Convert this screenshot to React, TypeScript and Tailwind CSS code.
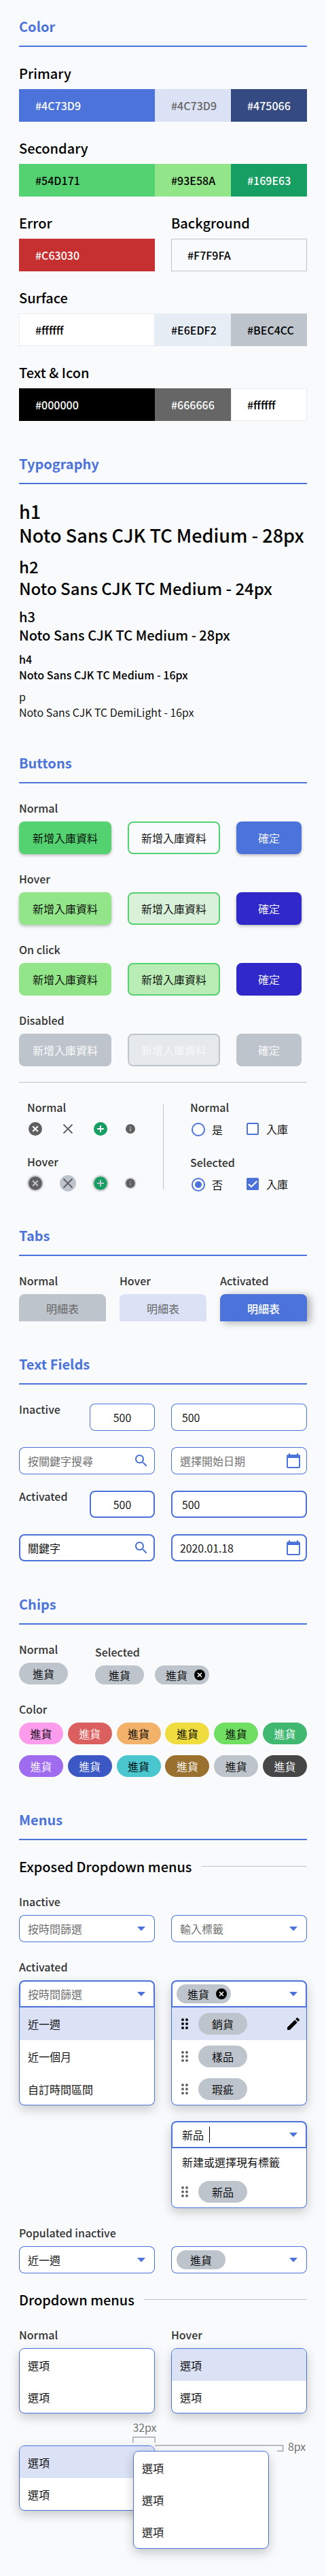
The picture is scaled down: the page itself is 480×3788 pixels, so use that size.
import type { ReactNode } from "react";

function Section({ title, className, children }: { title: string; className: string; children: ReactNode }) {
  return (
    <section className={className}>
      <h2 className="border-b-2 border-[#4C73D9] pt-px pb-3.5 text-xl leading-[29px] font-bold text-[#4C73D9]">{title}</h2>
      {children}
    </section>
  );
}

function Label({ children, className = "" }: { children: ReactNode; className?: string }) {
  return <div className={`text-base leading-6 font-medium text-[#333333] ${className}`}>{children}</div>;
}

function Swatches({ name, children }: { name: string; children: ReactNode }) {
  return (
    <div className="mt-6 flex-1">
      <h3 className="mb-[9px] text-xl leading-[29px] font-medium">{name}</h3>
      <div className="flex h-12">{children}</div>
    </div>
  );
}

function Swatch({ hex, className }: { hex: string; className: string }) {
  return <div className={`flex h-12 items-center text-base font-medium ${className}`}>{hex}</div>;
}

function TypeSample({ tag, text, className }: { tag: string; text: string; className: string }) {
  return (
    <div className={className}>
      <div>{tag}</div>
      <div className="whitespace-nowrap">{text}</div>
    </div>
  );
}

function ButtonRow({ label, solid, outline, confirm }: { label: string; solid: string; outline: string; confirm: string }) {
  return (
    <div className="mt-6">
      <Label>{label}</Label>
      <div className="mt-2 flex gap-6">
        <button className={`h-12 w-34 rounded-lg ${solid}`}>新增入庫資料</button>
        <button className={`h-12 w-34 rounded-lg border-2 ${outline}`}>新增入庫資料</button>
        <button className={`h-12 w-24 rounded-lg ${confirm}`}>確定</button>
      </div>
    </div>
  );
}

function Cancel({ size, className }: { size: number; className: string }) {
  return (
    <svg width={size} height={size} viewBox="2 2 20 20" className={`shrink-0 overflow-visible ${className}`}>
      <circle cx="12" cy="12" r="10" fill="currentColor" />
      <path d="M8.2 8.2l7.6 7.6M15.8 8.2l-7.6 7.6" className="stroke-(--cross)" strokeWidth="2" fill="none" />
    </svg>
  );
}

function IconRow({ hover }: { hover?: boolean }) {
  return (
    <div className="flex h-6 items-center">
      <div className="flex w-6 justify-center">
        <Cancel
          size={20}
          className={
            hover
              ? "rounded-full text-[#606060] shadow-[0_0_3px_1px_rgba(0,0,0,0.35)] [--cross:#bec4cc]"
              : "text-[#606060] [--cross:#ffffff]"
          }
        />
      </div>
      <div className={`ml-6 flex size-6 items-center justify-center rounded-full ${hover ? "bg-[#BEC4CC]" : ""}`}>
        <svg width="24" height="24" viewBox="0 0 24 24">
          <path d="M5.5 5.5l13 13M18.5 5.5l-13 13" stroke="#606060" strokeWidth="1.8" />
        </svg>
      </div>
      <div className="ml-6 flex w-6 justify-center">
        <svg
          width="20"
          height="20"
          viewBox="2 2 20 20"
          className={hover ? "rounded-full shadow-[0_0_3px_1px_rgba(0,0,0,0.35)]" : ""}
        >
          <circle cx="12" cy="12" r="10" fill="#169E63" />
          <path d="M12 7v10M7 12h10" stroke={hover ? "#bec4cc" : "#ffffff"} strokeWidth="2" />
        </svg>
      </div>
      <div className="ml-5 flex w-6 justify-center">
        <svg
          width="14"
          height="14"
          viewBox="2 2 20 20"
          className={hover ? "rounded-full shadow-[0_0_2px_1px_rgba(0,0,0,0.25)]" : ""}
        >
          <circle cx="12" cy="12" r="10" fill="#606060" />
          <path d="M11 11h2v6h-2zM11 7h2v2h-2z" fill={hover ? "#9a9da1" : "#c8cacc"} />
        </svg>
      </div>
    </div>
  );
}

function Choice({ on, radioText }: { on?: boolean; radioText: string }) {
  return (
    <div className="flex h-6 items-center leading-6">
      <div className="flex items-center gap-2 pt-0.5">
        <svg width="24" height="24" viewBox="0 0 24 24">
          <circle cx="12" cy="12" r="9" fill="#ffffff" stroke="#4C73D9" strokeWidth="2" />
          {on && <circle cx="12" cy="12" r="5" fill="#4C73D9" />}
        </svg>
        {radioText}
      </div>
      <div className="ml-8 flex items-center gap-2">
        <svg width="24" height="24" viewBox="0 0 24 24">
          {on ? (
            <>
              <rect x="3" y="3" width="18" height="18" rx="1.5" fill="#4C73D9" />
              <path d="M6 12.2l4 4L18.3 8" fill="none" stroke="#ffffff" strokeWidth="2" />
            </>
          ) : (
            <rect x="4" y="4" width="16" height="16" rx="1" fill="#ffffff" stroke="#4C73D9" strokeWidth="2" />
          )}
        </svg>
        入庫
      </div>
    </div>
  );
}

function SearchIcon() {
  return (
    <svg width="24" height="24" viewBox="0 0 24 24" fill="#4C73D9">
      <path d="M15.5 14h-.79l-.28-.27C15.41 12.59 16 11.11 16 9.5 16 5.91 13.09 3 9.5 3S3 5.91 3 9.5 5.91 16 9.5 16c1.61 0 3.09-.59 4.23-1.57l.27.28v.79l5 4.99L20.49 19l-4.99-5zm-6 0C7.01 14 5 11.99 5 9.5S7.01 5 9.5 5 14 7.01 14 9.5 11.99 14 9.5 14z" />
    </svg>
  );
}

function CalendarIcon() {
  return (
    <svg width="24" height="24" viewBox="0 0 24 24" fill="#4C73D9">
      <path d="M20 3h-1V1h-2v2H7V1H5v2H4c-1.1 0-2 .9-2 2v16c0 1.1.9 2 2 2h16c1.1 0 2-.9 2-2V5c0-1.1-.9-2-2-2zm0 18H4V8h16v13z" />
    </svg>
  );
}

function Arrow() {
  return (
    <svg width="12" height="7" viewBox="0 0 12 7" className="shrink-0">
      <path d="M0 0h12L6 6.6z" fill="#4C73D9" />
    </svg>
  );
}

function FieldRows({ label, active }: { label: string; active?: boolean }) {
  const ring = active ? "inset-ring-2" : "inset-ring";
  const field = `flex h-10 items-center rounded-lg bg-white inset-ring-[#4C73D9] ${ring}`;
  return (
    <div className="flex flex-col gap-6">
      <div className="flex">
        <Label className="-mt-1 w-26">{label}</Label>
        <div className={`${field} w-24 justify-center`}>500</div>
        <div className={`${field} ml-6 w-50 pl-4`}>500</div>
      </div>
      <div className="flex gap-6">
        <div className={`${field} w-50 justify-between pr-2 pl-[13px]`}>
          <span className={active ? "" : "text-[#666666]"}>{active ? "關鍵字" : "按關鍵字搜尋"}</span>
          <SearchIcon />
        </div>
        <div className={`${field} w-50 justify-between pr-2 pl-[13px]`}>
          <span className={active ? "" : "text-[#666666]"}>{active ? "2020.01.18" : "選擇開始日期"}</span>
          <CalendarIcon />
        </div>
      </div>
    </div>
  );
}

function Chip({ children, className }: { children: ReactNode; className: string }) {
  return <div className={`flex items-center rounded-full leading-6 ${className}`}>{children}</div>;
}

function RemovableChip() {
  return (
    <Chip className="h-7 w-20 justify-between bg-[#BEC4CC] pr-1.5 pl-4">
      進貨
      <Cancel size={16} className="text-black [--cross:#ffffff]" />
    </Chip>
  );
}

function Select({ children }: { children: ReactNode }) {
  return (
    <div className="flex h-10 w-50 items-center justify-between rounded-lg bg-white pr-3.5 pl-[13px] inset-ring inset-ring-[#4C73D9]">
      {children}
      <Arrow />
    </div>
  );
}

const menuShadow = "shadow-[0_6px_16px_rgba(0,0,0,0.2)]";

function OpenSelect({ head, children }: { head: ReactNode; children: ReactNode }) {
  return (
    <div className={`w-50 rounded-lg bg-white ${menuShadow}`}>
      <div className="flex h-10 items-center justify-between rounded-t-lg pr-3.5 pl-[13px] inset-ring-2 inset-ring-[#4C73D9]">
        {head}
        <Arrow />
      </div>
      <div className="overflow-hidden rounded-b-lg border border-t-0 border-[#4C73D9]">{children}</div>
    </div>
  );
}

function DragDots({ className }: { className: string }) {
  return (
    <svg width="12" height="18" viewBox="0 0 12 18" fill="currentColor" className={className}>
      {[3, 9, 15].map((y) => (
        <g key={y}>
          <circle cx="3" cy={y} r="2" />
          <circle cx="9" cy={y} r="2" />
        </g>
      ))}
    </svg>
  );
}

function TagRow({ tag, className = "h-12", active }: { tag: string; className?: string; active?: boolean }) {
  return (
    <div className={`flex items-center pr-[7px] pl-[13px] ${active ? "bg-[#DBE2F6]" : ""} ${className}`}>
      <DragDots className={active ? "text-black" : "text-[#666666]"} />
      <Chip className="ml-3.5 h-8 w-18 justify-center bg-[#BEC4CC]">{tag}</Chip>
      {active && (
        <svg width="24" height="24" viewBox="0 0 24 24" className="ml-auto">
          <path d="M3 17.25V21h3.75L17.81 9.94l-3.75-3.75L3 17.25zM20.71 7.04c.39-.39.39-1.02 0-1.41l-2.34-2.34c-.39-.39-1.02-.39-1.41 0l-1.83 1.83 3.75 3.75 1.83-1.83z" />
        </svg>
      )}
    </div>
  );
}

function OptionMenu({ className, rows, hovered }: { className: string; rows: number; hovered?: boolean }) {
  return (
    <div className={`flex w-50 flex-col overflow-hidden rounded-lg border border-[#4C73D9] bg-white ${menuShadow} ${className}`}>
      {Array.from({ length: rows }, (_, i) => (
        <div key={i} className={`flex flex-1 items-center pl-3 ${hovered && i === 0 ? "bg-[#DBE2F6]" : ""}`}>
          選項
        </div>
      ))}
    </div>
  );
}

const chipColors = [
  "bg-[#FC9CEC]",
  "bg-[#DC5F5F] text-white",
  "bg-[#F3B26A]",
  "bg-[#EFDC3F]",
  "bg-[#70DE60]",
  "bg-[#40B870] text-white",
  "bg-[#9F6BEF] text-white",
  "bg-[#3B58C4] text-white",
  "bg-[#49C6CE]",
  "bg-[#9A702E] text-white",
  "bg-[#BEC4CC]",
  "bg-[#464646] text-white",
];

export default function App() {
  return (
    <main className="h-[3788px] w-[480px] overflow-hidden bg-[#F8FAFC] px-7 pt-[23px] font-['Noto_Sans_CJK_TC','Noto_Sans',sans-serif] text-base font-[350] text-black">
      <Section title="Color" className="h-[643px]">
        <Swatches name="Primary">
          <Swatch hex="#4C73D9" className="w-50 bg-[#4C73D9] pl-6 text-white" />
          <Swatch hex="#4C73D9" className="w-28 bg-[#DBE2F6] pl-6 text-[#666666]" />
          <Swatch hex="#475066" className="w-28 bg-[#354A80] pl-6 text-white" />
        </Swatches>
        <Swatches name="Secondary">
          <Swatch hex="#54D171" className="w-50 bg-[#54D171] pl-6" />
          <Swatch hex="#93E58A" className="w-28 bg-[#93E58A] pl-6" />
          <Swatch hex="#169E63" className="w-28 bg-[#169E63] pl-6 text-white" />
        </Swatches>
        <div className="flex gap-6">
          <Swatches name="Error">
            <Swatch hex="#C63030" className="w-50 bg-[#C63030] pl-6 text-white" />
          </Swatches>
          <Swatches name="Background">
            <Swatch hex="#F7F9FA" className="w-50 border border-[#BEC4CC] pl-[23px]" />
          </Swatches>
        </div>
        <Swatches name="Surface">
          <Swatch hex="#ffffff" className="w-50 border border-[#E6EDF2] bg-white pl-[23px]" />
          <Swatch hex="#E6EDF2" className="w-28 bg-[#E6EDF4] pl-6" />
          <Swatch hex="#BEC4CC" className="w-28 bg-[#BEC4CC] pl-6" />
        </Swatches>
        <Swatches name="Text &amp; Icon">
          <Swatch hex="#000000" className="w-50 bg-black pl-6 text-white" />
          <Swatch hex="#666666" className="w-28 bg-[#666666] pl-6 text-white" />
          <Swatch hex="#ffffff" className="w-28 border border-[#E6EDF2] bg-white pl-[23px]" />
        </Swatches>
      </Section>

      <Section title="Typography" className="h-[440px]">
        <TypeSample tag="h1" text="Noto Sans CJK TC Medium - 28px" className="mt-[22px] text-[27px] leading-[35px] font-medium" />
        <TypeSample tag="h2" text="Noto Sans CJK TC Medium - 24px" className="mt-[13px] text-2xl leading-8 font-medium" />
        <TypeSample tag="h3" text="Noto Sans CJK TC Medium - 28px" className="mt-3 text-xl leading-[27px] font-medium" />
        <TypeSample tag="h4" text="Noto Sans CJK TC Medium - 16px" className="mt-[11px] text-base leading-[23px] font-medium" />
        <TypeSample tag="p" text="Noto Sans CJK TC DemiLight - 16px" className="mt-[9px] text-base leading-[23px]" />
      </Section>

      <Section title="Buttons" className="h-[695px]">
        <ButtonRow
          label="Normal"
          solid="bg-[#54D171] shadow-[0_2px_4px_rgba(0,0,0,0.25)]"
          outline="border-[#54D171]"
          confirm="bg-[#4C73D9] text-white shadow-[0_2px_4px_rgba(0,0,0,0.25)]"
        />
        <ButtonRow
          label="Hover"
          solid="bg-[#93E58A] shadow-[0_2px_4px_rgba(0,0,0,0.25)]"
          outline="border-[#54D171] bg-[#D8F1D8]"
          confirm="bg-[#3028C8] text-white shadow-[0_2px_4px_rgba(0,0,0,0.25)]"
        />
        <ButtonRow
          label="On click"
          solid="bg-[#93E58A]"
          outline="border-[#54D171] bg-[#BAEDB5]"
          confirm="bg-[#3028C8] text-white"
        />
        <ButtonRow
          label="Disabled"
          solid="bg-[#BEC4CC] text-white"
          outline="border-[#BEC4CC] bg-[#E5E9EC] text-[#F7F9FA]"
          confirm="bg-[#BEC4CC] text-white"
        />
        <hr className="mt-[23px] border-[#BEC4CC]" />
        <div className="mt-6 flex pl-3">
          <div className="w-50">
            <Label>Normal</Label>
            <div className="mt-2">
              <IconRow />
            </div>
            <Label className="mt-6">Hover</Label>
            <div className="mt-2">
              <IconRow hover />
            </div>
          </div>
          <div className="mt-2 h-[125px] w-px bg-[#BEC4CC]" />
          <div className="ml-[39px]">
            <Label>Normal</Label>
            <div className="mt-2">
              <Choice radioText="是" />
            </div>
            <Label className="mt-[25px]">Selected</Label>
            <div className="mt-2">
              <Choice on radioText="否" />
            </div>
          </div>
        </div>
      </Section>

      <Section title="Tabs" className="h-[189px]">
        <div className="mt-6 flex gap-5">
          <div>
            <Label>Normal</Label>
            <div className="mt-2 flex h-10 w-32 items-center justify-center rounded-t-lg bg-[#BEC4CC] pt-0.5 font-normal text-[#666666]">明細表</div>
          </div>
          <div>
            <Label>Hover</Label>
            <div className="mt-2 flex h-10 w-32 items-center justify-center rounded-t-lg bg-[#DBE2F6] pt-0.5 font-normal text-[#666666]">明細表</div>
          </div>
          <div>
            <Label>Activated</Label>
            <div className="mt-2 flex h-10 w-32 items-center justify-center rounded-t-lg bg-[#4C73D9] pt-0.5 font-medium text-white shadow-[5px_2px_12px_rgba(0,0,0,0.32)]">明細表</div>
          </div>
        </div>
      </Section>

      <Section title="Text Fields" className="h-[353px]">
        <div className="mt-7 flex flex-col gap-6">
          <FieldRows label="Inactive" />
          <FieldRows label="Activated" active />
        </div>
      </Section>

      <Section title="Chips" className="h-[317px]">
        <div className="mt-6 flex">
          <div className="w-28">
            <Label>Normal</Label>
            <Chip className="mt-2 h-8 w-18 justify-center bg-[#BEC4CC]">進貨</Chip>
          </div>
          <div className="pt-1">
            <Label>Selected</Label>
            <div className="mt-2 flex gap-4">
              <Chip className="h-7 w-18 justify-center bg-[#BEC4CC]">進貨</Chip>
              <RemovableChip />
            </div>
          </div>
        </div>
        <Label className="mt-6">Color</Label>
        <div className="mt-2 grid grid-cols-[repeat(6,65px)] justify-between gap-y-4">
          {chipColors.map((c) => (
            <Chip key={c} className={`h-8 justify-center ${c}`}>
              進貨
            </Chip>
          ))}
        </div>
      </Section>

      <Section title="Menus" className="">
        <div className="mt-6 flex h-[29px] items-center gap-[13px]">
          <h3 className="w-[255px] text-xl leading-[29px] font-medium whitespace-nowrap">Exposed Dropdown menus</h3>
          <div className="h-px flex-1 bg-[#BEC4CC]" />
        </div>
        <Label className="mt-[25px]">Inactive</Label>
        <div className="mt-2 flex gap-6">
          <Select>
            <span className="text-[#666666]">按時間篩選</span>
          </Select>
          <Select>
            <span className="text-[#666666]">輸入標籤</span>
          </Select>
        </div>

        <Label className="mt-6">Activated</Label>
        <div className="mt-2 flex items-start gap-6">
          <OpenSelect head={<span className="text-[#666666]">按時間篩選</span>}>
            <div className="flex h-12 items-center bg-[#DBE2F6] pl-3">近一週</div>
            <div className="flex h-12 items-center pl-3">近一個月</div>
            <div className="flex h-[47px] items-center pl-3">自訂時間區間</div>
          </OpenSelect>
          <div className="flex flex-col gap-[23px]">
            <OpenSelect
              head={
                <div className="-ml-[5px]">
                  <RemovableChip />
                </div>
              }
            >
              <TagRow tag="銷貨" active />
              <TagRow tag="樣品" />
              <TagRow tag="瑕疵" className="h-[47px]" />
            </OpenSelect>
            <OpenSelect
              head={
                <div className="flex items-center gap-2 pl-[3px]">
                  新品
                  <span className="h-6 w-px bg-black" />
                </div>
              }
            >
              <div className="flex h-10 items-center pl-[15px]">新建或選擇現有標籤</div>
              <TagRow tag="新品" className="h-[47px]" />
            </OpenSelect>
          </div>
        </div>

        <Label className="mt-6">Populated inactive</Label>
        <div className="mt-2 flex gap-6">
          <Select>近一週</Select>
          <Select>
            <Chip className="-ml-[5px] h-7 w-18 justify-center bg-[#BEC4CC]">進貨</Chip>
          </Select>
        </div>

        <div className="mt-6 flex h-[29px] items-center gap-[13px]">
          <h3 className="w-[171px] text-xl leading-[29px] font-medium whitespace-nowrap">Dropdown menus</h3>
          <div className="h-px flex-1 bg-[#BEC4CC]" />
        </div>
        <div className="mt-[25px] flex gap-6">
          <div>
            <Label>Normal</Label>
            <OptionMenu className="mt-2 h-24" rows={2} />
          </div>
          <div>
            <Label>Hover</Label>
            <OptionMenu className="mt-2 h-24" rows={2} hovered />
          </div>
        </div>

        <div className="relative mt-[47px]">
          <OptionMenu className="h-24" rows={2} hovered />
          <OptionMenu className="absolute top-2 left-[168px] h-36" rows={3} />
          <svg width="424" height="24" viewBox="0 0 424 24" className="absolute -top-3.5 left-0" fill="none" stroke="#A3A5A8" strokeWidth="1.5">
            <path d="M167.9 10V1.8h32.3V10M200 14h188.6v8.2H380" />
          </svg>
          <div className="absolute -top-[39px] left-[167.5px] leading-6 text-[#666666]">32px</div>
          <div className="absolute -top-[11px] left-[396px] leading-6 text-[#666666]">8px</div>
        </div>
      </Section>
    </main>
  );
}
